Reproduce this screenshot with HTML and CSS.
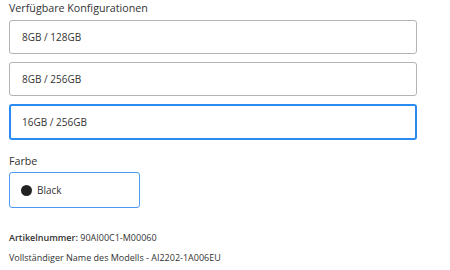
FILE: index.html
```html
<!DOCTYPE html>
<html lang="de">
<head>
    <meta charset="UTF-8">
    <title>Konfiguration</title>
    <link rel="stylesheet" href="styles.css">
</head>
<body>
    <div class="produkt">
        <h4 class="titel">Verfügbare Konfigurationen</h4>
        <div class="optionen">
            <div class="option">8GB / 128GB</div>
            <div class="option">8GB / 256GB</div>
            <div class="option aktiv">16GB / 256GB</div>
        </div>
        <h4 class="titel farbe-titel">Farbe</h4>
        <div class="farbe">
            <span class="punkt"></span>
            <span>Black</span>
        </div>
        <div class="details">
            <p><b>Artikelnummer:</b> 90AI00C1-M00060</p>
            <p>Vollständiger Name des Modells - AI2202-1A006EU</p>
        </div>
    </div>
</body>
</html>
```

FILE: styles.css
```css
body { margin: 0; font-family: "Open Sans", sans-serif; color: #333; background: #fff; }
.produkt { padding: 0 9px; width: 408px; }
.titel { margin: 0; font-size: 10.7px; font-weight: normal; line-height: 14px; padding-top: 1px; }
.optionen { display: flex; flex-direction: column; gap: 8px; margin-top: 5px; }
.option { border: 1px solid #b3b3b3; border-radius: 3px; height: 32px; padding: 0 12px; display: flex; align-items: center; font-size: 10px; }
.option.aktiv { border: 2px solid #2a8bf2; padding: 0 11px; height: 32px; }
.farbe-titel { margin-top: 13px; }
.farbe { width: 107px; height: 34px; border: 1px solid #4a9af0; border-radius: 3px; margin-top: 4px; display: flex; align-items: center; gap: 5px; padding: 0 11px; font-size: 10px; }
.punkt { width: 11px; height: 11px; border-radius: 50%; background: #222; }
.details { margin-top: 24px; font-size: 9px; }
.details p { margin: 0 0 8px; line-height: 12px; }
.details b { font-weight: 600; }
```
